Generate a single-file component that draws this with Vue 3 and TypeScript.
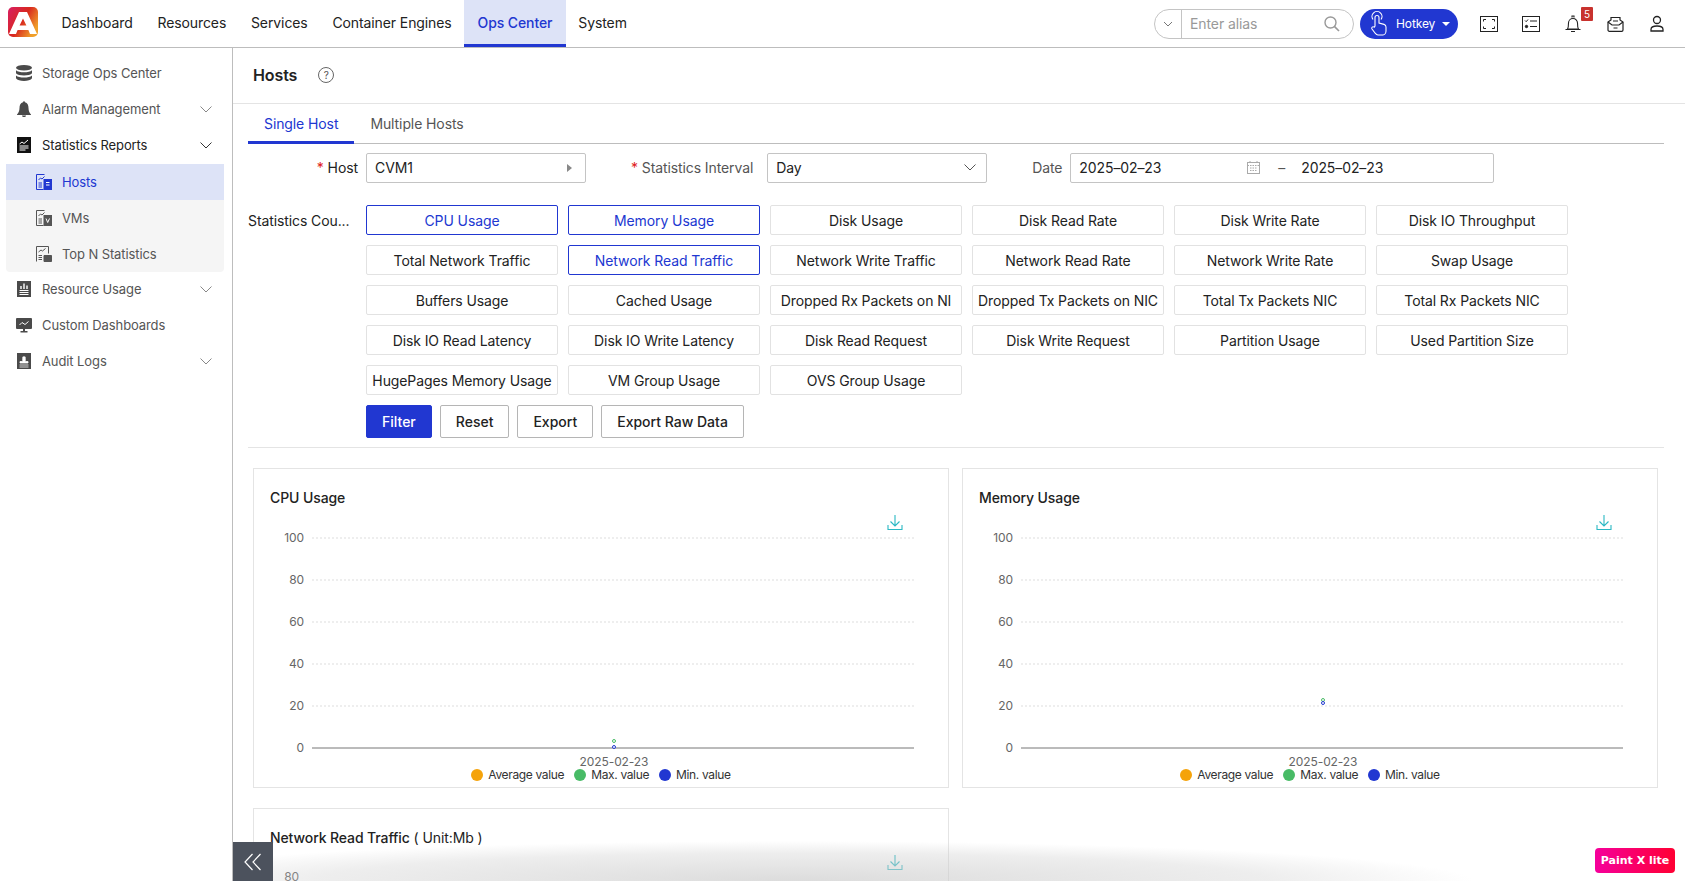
<script setup lang="ts">
const navItems = ['Dashboard', 'Resources', 'Services', 'Container Engines', 'Ops Center', 'System']
const counters = [
  ['CPU Usage', true], ['Memory Usage', true], ['Disk Usage', false], ['Disk Read Rate', false], ['Disk Write Rate', false], ['Disk IO Throughput', false],
  ['Total Network Traffic', false], ['Network Read Traffic', true], ['Network Write Traffic', false], ['Network Read Rate', false], ['Network Write Rate', false], ['Swap Usage', false],
  ['Buffers Usage', false], ['Cached Usage', false], ['Dropped Rx Packets on NI', false], ['Dropped Tx Packets on NIC', false], ['Total Tx Packets NIC', false], ['Total Rx Packets NIC', false],
  ['Disk IO Read Latency', false], ['Disk IO Write Latency', false], ['Disk Read Request', false], ['Disk Write Request', false], ['Partition Usage', false], ['Used Partition Size', false],
  ['HugePages Memory Usage', false], ['VM Group Usage', false], ['OVS Group Usage', false],
] as [string, boolean][]
const ticks = [100, 80, 60, 40, 20, 0]
const tickY = (i: number) => 49 + i * 42
const charts = [
  { title: 'CPU Usage', dots: [[360, 252, '#48bb66'], [360, 258, '#2137d1']] },
  { title: 'Memory Usage', dots: [[360, 211, '#48bb66'], [360, 214, '#2137d1']] },
] as { title: string; dots: [number, number, string][] }[]
</script>

<template>
  <div class="page">
    <header class="top">
      <svg class="logo" width="30" height="30" viewBox="0 0 30 30">
        <defs>
          <linearGradient id="lg" x1="0" y1="0" x2="1" y2="0.6">
            <stop offset="0" stop-color="#d81f63" />
            <stop offset="0.55" stop-color="#d8281f" />
            <stop offset="1" stop-color="#f0a02a" />
          </linearGradient>
        </defs>
        <rect width="30" height="30" rx="5" fill="url(#lg)" />
        <path d="M11 5h8l10 22h-7l-1.600-4H9.600L8 27H1zM15 11.500 11.600 18.500h6.800z" fill="#fff" fill-rule="evenodd" />
      </svg>
      <nav class="nav">
        <a v-for="n in navItems" :key="n" class="nav-item" :class="{ active: n === 'Ops Center' }">{{ n }}</a>
      </nav>
      <div class="top-right">
        <div class="search">
          <span class="search-drop">
            <svg width="10" height="6" viewBox="0 0 10 6"><path d="M1 1l4 4 4-4" fill="none" stroke="#777" /></svg>
          </span>
          <span class="search-text">Enter alias</span>
          <svg width="18" height="18" viewBox="0 0 18 18"><circle cx="7.500" cy="7.500" r="5.500" fill="none" stroke="#999" stroke-width="1.400" /><path d="M11.600 11.600 16 16" stroke="#999" stroke-width="1.600" /></svg>
        </div>
        <div class="hotkey">
          <svg width="20" height="26" viewBox="0 0 20 26" fill="none" stroke="#fff" stroke-width="1.100">
            <path d="M4 8.500a5 5 0 1 1 8 0" />
            <path d="M6 15V6.500a2 2 0 0 1 4 0V12l5 1.400c1.400.4 2 1.400 2 2.600v4c0 2-1.400 4-3 4H9c-1.400 0-2-.8-3-2l-3-4c-1-1.500.8-3 2.200-1.800z" />
          </svg>
          <span>Hotkey</span>
          <i class="caret"></i>
        </div>
        <div class="tools">
          <span class="tool"><svg width="18" height="16" viewBox="0 0 18 16" fill="none" stroke="#222" stroke-width="1"><rect x=".5" y=".5" width="17" height="15" /><path d="M3.500 5.500v-2h2.500M12 3.500h2.500v2M14.500 10.500v2H12M6 12.500H3.500v-2" /></svg></span>
          <span class="tool"><svg width="18" height="16" viewBox="0 0 18 16" fill="none" stroke="#222" stroke-width="1"><rect x=".5" y=".5" width="17" height="15" /><path d="M3 4.500l1.200 1.200L6 3.500M8 5h7M8 10.500h7" /><circle cx="4.500" cy="10.500" r="1.200" fill="#222" /></svg></span>
          <span class="tool"><span class="bell">
            <svg width="16" height="18" viewBox="0 0 16 18" fill="none" stroke="#222" stroke-width="1.100"><path d="M2.500 14c1-1.500 1-3 1-6a4.500 4.500 0 0 1 9 0c0 3 0 4.500 1 6zM.5 14.500h15M6 16.500h4M7 2.500V1h2v1.500" /></svg>
            <span class="badge">5</span>
          </span></span>
          <span class="tool"><svg width="17" height="17" viewBox="0 0 17 17" fill="none" stroke="#222" stroke-width="1.200"><path d="M1 7l3-2V2.500h9V5l3 2v8a1.300 1.300 0 0 1-1.300 1.300H2.300A1.300 1.300 0 0 1 1 15z" /><path d="M1 7l4 3h7l4-3M6 6h5M6.500 13h4" /></svg></span>
          <span class="tool"><svg width="14" height="17" viewBox="0 0 14 17" fill="none" stroke="#222" stroke-width="1.300"><circle cx="7" cy="5" r="3.500" /><path d="M1 16v-1.500C1 12 3.500 11 7 11s6 1 6 3.500V16z" /></svg></span>
        </div>
      </div>
    </header>

    <div class="body">
      <aside class="side">
        <div class="menu-row">
          <svg class="mi" width="16" height="16" viewBox="0 0 16 16" fill="#4a4a4a"><ellipse cx="8" cy="2.800" rx="8" ry="2.800" /><path d="M0 5.200c1.500 1.500 4.500 2 8 2s6.500-.5 8-2v3c-1 1.500-4.500 2.200-8 2.200S1 9.700 0 8.200zM0 10.500c1.500 1.500 4.500 2 8 2s6.500-.5 8-2v2.700C15 15 11.500 16 8 16s-7-1-8-2.800z" /></svg>
          <span>Storage Ops Center</span>
        </div>
        <div class="menu-row">
          <svg class="mi" width="15" height="16" viewBox="0 0 15 16" fill="#4a4a4a"><path d="M6.500 1.200a1 1 0 0 1 2 0C11 2 12 4 12 7c0 3 1 5 2.500 6.500v.5H.5v-.5C2 12 3 10 3 7c0-3 1-5 3.500-5.800zM5.500 14.500h4c0 1-1 1.500-2 1.500s-2-.5-2-1.500z" /></svg>
          <span>Alarm Management</span>
          <svg class="chev" width="12" height="7" viewBox="0 0 12 7"><path d="M.5.500 6 6l5.500-5.500" fill="none" stroke="#888" /></svg>
        </div>
        <div class="menu-row open">
          <svg class="mi" width="14" height="16" viewBox="0 0 14 16"><rect width="14" height="16" fill="#111" /><path d="M2.500 7l2.500-2 2 1.500 4-3.500" fill="none" stroke="#fff" /><path d="M2.500 9h9M2.500 11h9M2.500 13h6" stroke="#fff" /></svg>
          <span>Statistics Reports</span>
          <svg class="chev" width="12" height="7" viewBox="0 0 12 7"><path d="M.5.500 6 6l5.500-5.500" fill="none" stroke="#333" /></svg>
        </div>
        <div class="sub">
          <div class="sub-row current">
            <svg width="16" height="16" viewBox="0 0 16 16" fill="none" stroke="#2137d1"><path d="M8.500.5H.5v15h7" /><path d="M2.500 6l2-2 1.500 1 2.500-2.500M2.500 9H6M2.500 11H6M2.500 13H6" /><rect x="8" y="5.500" width="7.500" height="10" fill="#2137d1" /><path d="M10 8.500h3.500M10 11h3.500" stroke="#fff" /></svg>
            <span>Hosts</span>
          </div>
          <div class="sub-row">
            <svg width="16" height="16" viewBox="0 0 16 16" fill="none" stroke="#555"><path d="M8.500.5H.5v15h7" /><path d="M2.500 6l2-2 1.500 1 2.500-2.500M2.500 9H6M2.500 11H6M2.500 13H6" /><rect x="8" y="5.500" width="7.500" height="10" fill="#555" /><path d="M10 8.500l1.700 4 1.800-4" stroke="#fff" /></svg>
            <span>VMs</span>
          </div>
          <div class="sub-row">
            <svg width="16" height="16" viewBox="0 0 16 16" fill="none" stroke="#555"><path d="M.5 15.500V.5h12v7" /><path d="M2.500 6l2.500-2 1.500 1 3-2.500M2.500 9.500H6M2.500 11.500H6M2.500 13.500H6" /><path d="M8 15.500v-6h7.500v6z" fill="#555" /></svg>
            <span>Top N Statistics</span>
          </div>
        </div>
        <div class="menu-row">
          <svg class="mi" width="14" height="16" viewBox="0 0 14 16"><rect width="14" height="16" fill="#4a4a4a" /><path d="M4 8V5M7 8V2.500M10 8V4.500" stroke="#fff" stroke-width="1.400" /><path d="M2.500 9.500h9M2.500 11.500h9M2.500 13.500h9" stroke="#fff" /></svg>
          <span>Resource Usage</span>
          <svg class="chev" width="12" height="7" viewBox="0 0 12 7"><path d="M.5.500 6 6l5.500-5.500" fill="none" stroke="#888" /></svg>
        </div>
        <div class="menu-row">
          <svg class="mi" width="16" height="15" viewBox="0 0 16 15"><rect width="16" height="11" rx="1" fill="#4a4a4a" /><path d="M3.500 7l2.500-2.500 3 2 3.500-3" fill="none" stroke="#fff" /><path d="M7 11h2v2H7zM4.500 13h7v1.500h-7z" fill="#4a4a4a" /></svg>
          <span>Custom Dashboards</span>
        </div>
        <div class="menu-row">
          <svg class="mi" width="14" height="16" viewBox="0 0 14 16"><rect width="14" height="16" fill="#4a4a4a" /><circle cx="7" cy="5" r="1.800" fill="#fff" /><path d="M5.800 6h2.400v2.500H11V10H3V8.500h2.800zM2.500 12h9M2.500 14h9" fill="#fff" stroke="#fff" stroke-width=".8" /></svg>
          <span>Audit Logs</span>
          <svg class="chev" width="12" height="7" viewBox="0 0 12 7"><path d="M.5.500 6 6l5.500-5.500" fill="none" stroke="#888" /></svg>
        </div>
      </aside>

      <main class="main">
        <div class="title-bar">
          <h1>Hosts</h1>
          <span class="help">?</span>
        </div>
        <div class="content">
          <div class="tabs">
            <span class="tab on">Single Host</span>
            <span class="tab">Multiple Hosts</span>
          </div>

          <div class="form-row">
            <label class="lab lab-host"><em>*</em> Host</label>
            <div class="field f-host">
              <span>CVM1</span>
              <i class="tri"></i>
            </div>
            <label class="lab lab-int"><em>*</em> Statistics Interval</label>
            <div class="field f-int">
              <span>Day</span>
              <svg width="12" height="7" viewBox="0 0 12 7"><path d="M.5.500 6 6l5.500-5.500" fill="none" stroke="#555" /></svg>
            </div>
            <label class="lab lab-date">Date</label>
            <div class="field f-date">
              <span class="d1">2025–02–23</span>
              <svg width="13" height="13" viewBox="0 0 13 13" fill="none" stroke="#aaa"><rect x=".5" y="1.500" width="12" height="11" /><path d="M.5 4.500h12M3 0v2M10 0v2M3 7h7M3 9.500h7" stroke-dasharray="1.500 1" /></svg>
              <span class="dash">–</span>
              <span>2025–02–23</span>
            </div>
          </div>

          <div class="count-row">
            <label class="lab lab-count">Statistics Cou...</label>
            <div class="count-grid">
              <button v-for="c in counters" :key="c[0]" class="cbtn" :class="{ sel: c[1] }">{{ c[0] }}</button>
            </div>
          </div>

          <div class="actions">
            <button class="abtn primary">Filter</button>
            <button class="abtn">Reset</button>
            <button class="abtn">Export</button>
            <button class="abtn">Export Raw Data</button>
          </div>

          <div class="chart-grid">
            <section v-for="ch in charts" :key="ch.title" class="card">
              <h3>{{ ch.title }}</h3>
              <svg class="chart" width="694" height="260" viewBox="0 19 694 260">
                <g v-for="(t, i) in ticks" :key="t">
                  <line :x1="58" :x2="660" :y1="tickY(i)" :y2="tickY(i)"
                    :stroke="t === 0 ? '#777' : '#ddd'" :stroke-dasharray="t === 0 ? '' : '2 2'" />
                  <text :x="50" :y="tickY(i) + 4" text-anchor="end" class="tick">{{ t }}</text>
                </g>
                <circle v-for="(d, i) in ch.dots" :key="i" :cx="d[0]" :cy="d[1]" r="1.500" fill="#fff" :stroke="d[2]" />
                <g transform="translate(634 26)" fill="none" stroke="#2bb8c4" stroke-width="1.100">
                  <path d="M7 0v11M2.500 6.500 7 11l4.500-4.500M0 10v4.500h14V10" />
                </g>
                <text x="360" y="277" text-anchor="middle" class="tick">2025-02-23</text>
              </svg>
              <div class="legend">
                <span><i class="dot-avg"></i>Average value</span>
                <span><i class="dot-max"></i>Max. value</span>
                <span><i class="dot-min"></i>Min. value</span>
              </div>
            </section>
            <section class="card">
              <h3>Network Read Traffic<span class="unit"> ( Unit:Mb )</span></h3>
              <svg class="chart" width="694" height="60" viewBox="0 19 694 60">
                <g transform="translate(634 26)" fill="none" stroke="#2bb8c4" stroke-width="1.100">
                  <path d="M7 0v11M2.500 6.500 7 11l4.500-4.500M0 10v4.500h14V10" />
                </g>
                <text x="45" y="52" text-anchor="end" class="tick">80</text>
              </svg>
            </section>
          </div>
        </div>
      </main>
    </div>

    <div class="shade"></div>
    <div class="collapse">
      <svg width="18" height="18" viewBox="0 0 18 18" fill="none" stroke="#fff" stroke-width="1.200"><path d="M8.500 1 1 9l7.500 8M16.500 1 9 9l7.500 8" /></svg>
    </div>
    <div class="paint">Paint X lite</div>
  </div>
</template>

<style>
html, body { margin: 0; height: 100%; overflow: hidden; background: #fff; }
</style>

<style scoped>
.page {
  position: relative; width: 1685px; height: 881px; overflow: hidden; background: #fff;
  font-family: "Inter", "Noto Sans", "Liberation Sans", sans-serif; font-size: 14px; color: #222;
  letter-spacing: -0.1px;
}
.top { height: 47px; display: flex; align-items: center; border-bottom: 1px solid #bdbdbd; }
.logo { margin: 0 0 3px 8px; flex: none; }
.nav { display: flex; height: 47px; margin-left: 11px; }
.nav-item { display: flex; align-items: center; padding: 0 12.400px 3px; color: #222; box-sizing: border-box; }
.nav-item.active { background: #dde3f7; color: #2137d1; font-weight: 500; border-bottom: 3px solid #2137d1; padding: 0 13.500px; }
.top-right { margin-left: auto; display: flex; align-items: center; padding-right: 7px; }
.search { width: 200px; height: 30px; box-sizing: border-box; border: 1px solid #c4c4c4; border-radius: 15px; display: flex; align-items: center; margin-right: 6px; padding-right: 12px; }
.search-drop { width: 26px; height: 28px; display: flex; align-items: center; justify-content: center; border-right: 1px solid #c4c4c4; flex: none; }
.search-text { flex: 1; padding-left: 8px; color: #999; }
.hotkey { width: 98px; height: 30px; box-sizing: border-box; border-radius: 15px; background: #2137d1; color: #fff; display: flex; align-items: center; padding-left: 9px; font-size: 12px; gap: 7px; }
.caret { width: 0; height: 0; border-left: 4px solid transparent; border-right: 4px solid transparent; border-top: 4px solid #fff; }
.tools { display: flex; align-items: center; margin-left: 10px; }
.tool { width: 42px; display: flex; align-items: center; justify-content: center; }
.bell { position: relative; display: flex; }
.badge { position: absolute; left: 16px; top: -8px; background: #c8322e; color: #fff; font-size: 10px; width: 12px; height: 14px; text-align: center; line-height: 14px; border-radius: 1px; }

.body { display: flex; height: 833px; }
.side { width: 233px; flex: none; border-right: 1px solid #bdbdbd; box-sizing: border-box; padding-top: 7px; color: #555; font-size: 13px; }
.menu-row { height: 36px; display: flex; align-items: center; padding: 0 20px 0 16px; }
.mi { width: 16px; flex: none; margin-right: 10px; }
.chev { margin-left: auto; }
.menu-row.open { color: #222; }
.sub { margin: 1px 8px -1px 6px; background: #f5f5f5; border-radius: 0 0 4px 4px; }
.sub-row { height: 36px; display: flex; align-items: center; padding: 0 0 1px 30px; box-sizing: border-box; gap: 10px; }
.sub-row.current { background: #dde3f7; color: #2137d1; }

.main { flex: 1; min-width: 0; display: flex; flex-direction: column; }
.title-bar { height: 56px; flex: none; box-sizing: border-box; border-bottom: 1px solid #e4e4e4; display: flex; align-items: center; padding: 0 0 2px 20px; gap: 21px; }
.title-bar h1 { margin: 0; font-size: 16px; font-weight: 600; color: #222; }
.help { width: 14px; height: 14px; border: 1px solid #666; border-radius: 50%; display: flex; align-items: center; justify-content: center; font-size: 10px; color: #555; }
.content { padding: 0 21px 0 15px; }
.tabs { height: 40px; box-sizing: border-box; border-bottom: 1px solid #bdbdbd; display: flex; }
.tab { padding: 0 16px; display: flex; align-items: center; color: #555; box-sizing: border-box; }
.tab.on { color: #2137d1; border-bottom: 3px solid #2137d1; height: 40px; padding-top: 1px; }

.form-row { display: flex; align-items: center; margin-top: 9px; height: 30px; }
.lab { color: #555; white-space: nowrap; }
.form-row .lab { padding-bottom: 1px; }
.lab em { color: #e02020; font-style: normal; }
.lab-host { width: 110px; text-align: right; color: #222; }
.lab-int { margin-left: 45px; }
.lab-date { margin-left: 45px; }
.lab-count { width: 110px; color: #222; line-height: 32px; }
.field { height: 30px; box-sizing: border-box; border: 1px solid #c4c4c4; border-radius: 2px; display: flex; align-items: center; padding: 0 8px 1px; margin-left: 8px; }
.f-host { width: 220px; justify-content: space-between; }
.f-int { width: 220px; justify-content: space-between; padding-right: 10px; margin-left: 14px; }
.f-date { width: 424px; }
.d1 { width: 168px; }
.dash { margin: 0 16px 0 18px; color: #555; }
.tri { width: 0; height: 0; border-top: 4px solid transparent; border-bottom: 4px solid transparent; border-left: 5px solid #888; margin-right: 5px; }

.count-row { display: flex; margin-top: 22px; }
.count-grid { display: grid; grid-template-columns: repeat(6, 192px); grid-auto-rows: 30px; gap: 10px; margin-left: 8px; }
.cbtn { font: inherit; letter-spacing: inherit; background: #fff; border: 1px solid #e2e2e2; border-radius: 2px; color: #222; padding: 0; white-space: nowrap; overflow: hidden; }
.cbtn.sel { color: #2137d1; border-color: #2137d1; }
.actions { display: flex; gap: 8px; margin-top: 10px; padding: 0 0 9px 118px; border-bottom: 1px solid #e4e4e4; }
.abtn { font: inherit; letter-spacing: 0; height: 33px; padding: 0 15px; background: #fff; border: 1px solid #b5b5b5; border-radius: 2px; color: #222; font-weight: 500; }
.abtn.primary { background: #2137d1; border-color: #2137d1; color: #fff; }

.chart-grid { display: grid; grid-template-columns: 696px 696px; column-gap: 13px; row-gap: 20px; margin: 20px 0 0 5px; }
.card { height: 320px; box-sizing: border-box; border: 1px solid #e4e4e4; }
.card h3 { margin: 0; padding: 19px 0 0 16px; line-height: 20px; font-size: 14px; font-weight: 500; color: #222; }
.unit { font-weight: 400; }
.chart { display: block; }
.tick { font-size: 12px; fill: #666; }
.legend { display: flex; justify-content: center; gap: 10px; font-size: 12px; line-height: 14px; color: #333; letter-spacing: -0.35px; }
.legend span { display: flex; align-items: center; gap: 5px; }
.legend i { width: 12px; height: 12px; border-radius: 50%; }
.dot-avg { background: #f5a30a; }
.dot-max { background: #48bb66; }
.dot-min { background: #2137d1; }

.shade { position: absolute; left: 233px; right: 0; bottom: 0; height: 40px; pointer-events: none;
  background: radial-gradient(ellipse 680px 40px at 560px 100%, rgba(205,205,205,.7), rgba(205,205,205,.35) 70%, rgba(255,255,255,0) 100%); }
.collapse { position: absolute; left: 233px; top: 842px; width: 40px; height: 39px; background: #4c525d; display: flex; align-items: center; justify-content: center; }
.paint { position: absolute; left: 1595px; top: 848px; width: 80px; height: 25px; border-radius: 4px; background: linear-gradient(90deg, #f5009b, #ff0033); color: #fff; font-family: "DejaVu Sans", sans-serif; font-weight: 700; font-size: 11px; display: flex; align-items: center; justify-content: center; letter-spacing: 0; }
</style>
